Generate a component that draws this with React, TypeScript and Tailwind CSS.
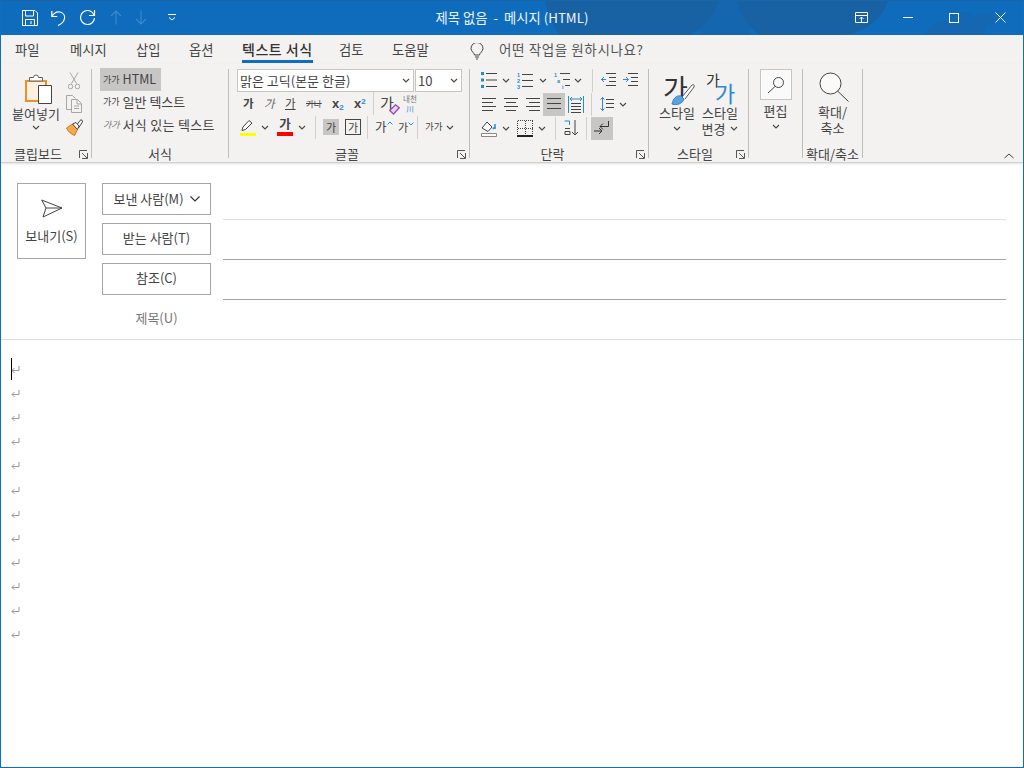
const FONT = "font-['Noto_Sans_CJK_KR','Noto_Sans',sans-serif]";

function Chev({ className = "" }: { className?: string }) {
  return (
    <svg width="8" height="5" viewBox="0 0 8 5" className={className}>
      <path d="M1 1l3 3 3-3" fill="none" stroke="#444" strokeWidth="1.1" />
    </svg>
  );
}

function Launcher() {
  return (
    <svg width="9" height="9" viewBox="0 0 9 9" className="shrink-0">
      <path d="M.5 8V.5H8M8.5 8.5H3M8.5 8.5V3M3 3l5 5" fill="none" stroke="#555" strokeWidth="1" />
    </svg>
  );
}

function Sep({ className = "" }: { className?: string }) {
  return <div className={`w-px h-[23px] bg-[#d2d0ce] shrink-0 ${className}`} />;
}

function Group({ label, width, launcher, labelClass = "", children }: { label: string; width: number; launcher?: boolean; labelClass?: string; children: React.ReactNode }) {
  return (
    <div className="flex flex-col shrink-0 h-[89px] border-r border-[#c0bebc]" style={{ width }}>
      <div className="flex-1 min-h-0">{children}</div>
      <div className="h-[18px] pt-[9px] flex items-center relative text-[13px] text-[#444] justify-center leading-none">
        <span className={labelClass}>{label}</span>
        {launcher && (
          <span className="absolute right-[3px] top-[10px] flex">
            <Launcher />
          </span>
        )}
      </div>
    </div>
  );
}

function Lines({ x = 0, w = 14, y = 3, gap = 5, n = 3, color = "#444" }: { x?: number; w?: number; y?: number; gap?: number; n?: number; color?: string }) {
  return (
    <>
      {Array.from({ length: n }).map((_, i) => (
        <path key={i} d={`M${x} ${y + i * gap + 0.5}h${w}`} stroke={color} strokeWidth="1" />
      ))}
    </>
  );
}

function Align({ kind }: { kind: "l" | "c" | "r" | "j" }) {
  const rows = [
    [0, 14],
    kind === "l" ? [0, 11] : kind === "c" ? [2, 10] : kind === "r" ? [3, 11] : [0, 14],
    [0, 14],
    kind === "l" ? [0, 11] : kind === "c" ? [2, 10] : kind === "r" ? [3, 11] : [0, 14],
  ];
  if (kind === "j") rows.splice(3, 1);
  const gap = kind === "j" ? 5 : 4;
  return (
    <svg width="14" height="14" viewBox="0 0 14 14" className="block">
      {rows.map((r, i) => (
        <path key={i} d={`M${r[0]} ${1.5 + i * gap}h${r[1]}`} stroke="#444" strokeWidth="1" />
      ))}
    </svg>
  );
}

function Ga({ className = "" }: { className?: string }) {
  return <span className={`leading-none ${className}`}>가</span>;
}

export default function App() {
  return (
    <div className={`w-[1024px] h-[768px] bg-white border border-[#106ebe] border-t-0 flex flex-col overflow-hidden text-[#444] ${FONT}`}>
      {/* title bar */}
      <div className="h-[35px] shrink-0 -mx-px bg-[#0f6cbd] relative flex items-center text-white">
        <svg width="1024" height="35" viewBox="0 0 1024 35" className="absolute inset-0">
          <path d="M700 0h50v35h-50z" fill="#1467ae" />
          <path d="M545 0h173c-2 12-13 28-28 35H560c-8-10-13-23-15-35z" fill="#1861a3" />
          <path d="M737 0h151c-4 16-18 30-43 35h-85c-12-7-20-21-23-35z" fill="#1861a3" />
          <path d="M925 35c6-9 14-16 22-14 4-9 20-12 28-4 6-7 18-5 22 4-10 2-14 8-12 14z" fill="#1467b0" />
          <path d="M0 0h1024v1H0z" fill="#1a64a8" />
        </svg>
        <div className="relative flex items-center pl-[22px] gap-[12px]">
          <svg width="16" height="16" viewBox="0 0 16 16" fill="none" stroke="#fff" strokeWidth="1">
            <path d="M.5.5h12.500l2.500 2.500v12.500H.5zM3.500.5v5.500h8V.5M3.500 15.500V9.500h9v6M9 11v3" />
          </svg>
          <svg width="15" height="16" viewBox="0 0 15 16" fill="none" stroke="#fff" strokeWidth="1.2" className="ml-[1px]">
            <path d="M.8 1v5.500h5.500M1 6.300C3 3 6 1.500 9 2c3.500.8 5 3.800 4.500 6.500-.5 2.800-3 5.500-6.500 7" />
          </svg>
          <svg width="17" height="17" viewBox="0 0 17 17" fill="none" stroke="#fff" strokeWidth="1.2" className="ml-[1px]">
            <path d="M15.500 1v5.500H10M15 6C13.500 3 11.200 1.500 8.500 1.500a7 7 0 1 0 7 7.500" />
          </svg>
          <svg width="12" height="15" viewBox="0 0 12 15" fill="none" stroke="#3d8ccb" strokeWidth="1.1" className="ml-[2px]">
            <path d="M6 14.500V1M1 6l5-5 5 5" />
          </svg>
          <svg width="12" height="15" viewBox="0 0 12 15" fill="none" stroke="#3d8ccb" strokeWidth="1.1" className="ml-[1px]">
            <path d="M6 .5V14M1 9l5 5 5-5" />
          </svg>
          <svg width="8" height="7" viewBox="0 0 8 7" fill="none" stroke="#fff" strokeWidth="1" className="ml-[9px]">
            <path d="M0 .5h8M1 3.500l3 2.500 3-2.500" />
          </svg>
        </div>
        <div className="absolute left-0 right-0 top-0 h-full flex items-center justify-center text-[13.3px] text-[#f0f6fb] whitespace-pre">
          <span>제목 없음  -  메시지 (HTML)</span>
        </div>
        <div className="relative ml-auto flex items-center h-full">
          <svg width="13" height="11" viewBox="0 0 13 11" fill="none" stroke="#fff" strokeWidth="1" className="mr-[35px]">
            <path d="M.5.500h12v10H.5zM.5 3.500h12M6.500 10V5M4.500 7l2-2 2 2" />
          </svg>
          <div className="w-[10px] h-px bg-white mr-[36px]" />
          <div className="w-[10px] h-[10px] border border-white mr-[36px]" />
          <svg width="11" height="11" viewBox="0 0 11 11" fill="none" stroke="#fff" strokeWidth="1" className="mr-[18px]">
            <path d="M.5.500l10 10M10.500.500l-10 10" />
          </svg>
        </div>
      </div>

      {/* tabs */}
      <div className="h-[29px] shrink-0 bg-[#f3f2f1] flex items-start pl-[14px] text-[13.3px] text-[#444] leading-none relative">
        <span className="mt-[8px] w-[55px]">파일</span>
        <span className="mt-[8px] w-[66px]">메시지</span>
        <span className="mt-[8px] w-[53px]">삽입</span>
        <span className="mt-[8px] w-[53px]">옵션</span>
        <div className="w-[97px] relative h-full">
          <span className="absolute top-[7px] left-0 font-medium text-[#333] whitespace-nowrap text-[14px] tracking-[0.5px]">텍스트 서식</span>
          <div className="absolute left-0 top-[25px] w-[71px] h-[3px] bg-[#106ebe]" />
        </div>
        <span className="mt-[8px] w-[53px]">검토</span>
        <span className="mt-[8px] w-[78px]">도움말</span>
        <svg width="14" height="17" viewBox="0 0 14 17" fill="none" stroke="#444" strokeWidth="1" className="mt-[8px]">
          <path d="M4.500 12c0-2-3.500-3.500-3.500-6.500a6 6 0 0 1 12 0C13 8.500 9.500 10 9.500 12zM5 14h4M6 16h2" />
        </svg>
        <span className="mt-[8px] ml-[15px] text-[13.5px] tracking-[0.6px] text-[#555]">어떤 작업을 원하시나요?</span>
      </div>

      {/* ribbon */}
      <div className="h-[99px] shrink-0 bg-[#f3f2f1] border-b border-[#d2d0ce] shadow-[0_1px_2px_rgba(0,0,0,0.12)] flex items-start pt-[5px] relative text-[#444]">
        <Group label="클립보드" width={91} launcher labelClass="mr-[16px]">
          <div className="flex pl-[10px] h-full">
            <div className="w-[50px] flex flex-col items-center">
              <svg width="28" height="31" viewBox="0 0 28 31" className="ml-[5px] mt-[4px] shrink-0">
                <path d="M1 8h20v20H1z" fill="#fdf0e0" stroke="#e8912d" strokeWidth="2" />
                <path d="M4.500 4.500h4a2.500 2.500 0 0 1 5 0h4v3.500h-13z" fill="#fff" stroke="#666" strokeWidth="1" />
                <path d="M13.500 12.500h13v18h-13z" fill="#fff" stroke="#444" strokeWidth="1" />
              </svg>
              <span className="text-[13px] leading-none mt-[3px] whitespace-nowrap">붙여넣기</span>
              <Chev className="mt-[5px]" />
            </div>
            <div className="ml-[4px] flex flex-col items-center w-[18px] -mt-[1px]">
              <svg width="12" height="18" viewBox="0 0 12 18" fill="none" stroke="#a8a6a4" strokeWidth="1" className="mt-[4px]">
                <path d="M2 .5l6.500 11M10 .5l-6.500 11" />
                <circle cx="2.500" cy="14.500" r="2.300" />
                <circle cx="9.500" cy="14.500" r="2.300" />
              </svg>
              <svg width="17" height="18" viewBox="0 0 17 18" fill="none" stroke="#a8a6a4" strokeWidth="1" className="mt-[5px]">
                <path d="M5.500 14.500H.5V.5h6l3 3M5.500 4.500h6l4 4v9h-10zM11 5v4h4.500M8 11h5M8 13.500h5" />
              </svg>
              <svg width="17" height="17" viewBox="0 0 17 17" className="mt-[6px]">
                <path d="M.5 9l6-4 5 5.500-3 6c-3-1.500-6.500-3.500-8-7.500z" fill="#f7a84a" stroke="#d9761a" strokeWidth="1" />
                <path d="M10 7l4-5.500a1.400 1.400 0 0 1 2.300 1.700L12.500 9" fill="#fff" stroke="#444" strokeWidth="1" />
                <path d="M6.500 5l3.500-1.500 3 3.500-1.500 3.500z" fill="#fff" stroke="#444" strokeWidth="1" />
              </svg>
            </div>
          </div>
        </Group>

        <Group label="서식" width={137}>
          <div className="flex flex-col pl-[8px] -mt-[1px] text-[13px] leading-none">
            <div className="w-[61px] h-[23px] bg-[#c8c6c4] flex items-center pl-[3px] whitespace-nowrap">
              <span className="text-[9px] mr-[3px]">가가</span>
              <span className="text-[12.5px]">HTML</span>
            </div>
            <div className="h-[21px] flex items-center pl-[3px] whitespace-nowrap">
              <span className="text-[9px] mr-[3px]">가가</span>
              <span>일반 텍스트</span>
            </div>
            <div className="h-[24px] flex items-center pl-[3px] whitespace-nowrap">
              <span className="text-[9px] mr-[3px] italic text-[#777]">가가</span>
              <span className="tracking-[0.3px]">서식 있는 텍스트</span>
            </div>
          </div>
        </Group>

        <Group label="글꼴" width={241} launcher labelClass="mr-[4px]">
          <div className="flex flex-col pl-[8px]">
            <div className="flex gap-px">
              <div className="w-[177px] h-[23px] bg-white border border-[#c8c6c4] flex items-center pl-[2px] pr-[3px] text-[13px] leading-none">
                <span className="whitespace-nowrap">맑은 고딕(본문 한글)</span>
                <Chev className="ml-auto" />
              </div>
              <div className="w-[47px] h-[23px] bg-white border border-[#c8c6c4] flex items-center pl-[2px] pr-[3px] text-[13px] leading-none">
                <span>10</span>
                <Chev className="ml-auto" />
              </div>
            </div>
            <div className="flex items-center h-[23px] text-[11.5px] pl-[6px]">
              <Ga className="font-bold w-[21px]" />
              <Ga className="italic text-[#666] w-[21px]" />
              <Ga className="underline w-[21px]" />
              <span className="line-through text-[8.5px] w-[26px] leading-none">가나</span>
              <span className="w-[22px] font-bold text-[13px] leading-none font-['Liberation_Sans',sans-serif]">x<sub className="text-[#2b88d8] text-[8px]">2</sub></span>
              <span className="w-[19px] font-bold text-[13px] leading-none font-['Liberation_Sans',sans-serif]">x<sup className="text-[#2b88d8] text-[8px]">2</sup></span>
              <Sep className="mr-[6px]" />
              <span className="relative w-[20px] h-[20px] flex items-center">
                <Ga className="text-[15px] -mt-[2px]" />
                <svg width="11" height="11" viewBox="0 0 11 11" className="absolute right-0 bottom-[-1px]">
                  <path d="M.8 6.500L6.500.8l3.700 3L4.500 10z" fill="#e8d3ee" stroke="#9b4fb5" strokeWidth="1.300" />
                </svg>
              </span>
              <span className="flex flex-col items-center text-[7.5px] leading-[10px] text-[#777] ml-[3px]">
                <span>내천</span>
                <span className="text-[#2b88d8]">川</span>
              </span>
            </div>
            <div className="flex items-center h-[24px] text-[12px]">
              <span className="w-[16px] ml-[3px] flex justify-center relative">
                <svg width="16" height="17" viewBox="0 0 16 17">
                  <path d="M2 11l1-3 6-6.500 3 2.500-6.500 6.500-3.500 1z" fill="#fff" stroke="#444" strokeWidth="1" />
                  <path d="M0 14h16v3H0z" fill="#ffff00" />
                </svg>
              </span>
              <Chev className="ml-[5px]" />
              <span className="w-[16px] ml-[8px] flex flex-col items-center leading-none">
                <span className="font-bold text-[12.5px] h-[13px]">가</span>
                <span className="w-[16px] h-[4px] bg-[#ff0000] mt-[1px]" />
              </span>
              <Chev className="ml-[5px]" />
              <Sep className="ml-[9px] mr-[7px]" />
              <span className="w-[16px] h-[16px] bg-[#c8c6c4] flex items-center justify-center"><Ga className="text-[11px]" /></span>
              <span className="w-[16px] h-[16px] border border-[#444] flex items-center justify-center ml-[6px]"><Ga className="text-[11px]" /></span>
              <Sep className="ml-[6px] mr-[7px]" />
              <span className="flex items-start w-[20px] text-[12.5px]"><Ga />
                <svg width="6" height="4" viewBox="0 0 6 4" fill="none" stroke="#2b88d8"><path d="M.5 3.500L3 1l2.500 2.500" /></svg>
              </span>
              <span className="flex items-start w-[19px] text-[11px] ml-[3px]"><Ga />
                <svg width="6" height="4" viewBox="0 0 6 4" fill="none" stroke="#2b88d8"><path d="M.5.500L3 3l2.500-2.500" /></svg>
              </span>
              <Sep className="mr-[7px]" />
              <span className="text-[9.500px] leading-none">가가</span>
              <Chev className="ml-[4px]" />
            </div>
          </div>
        </Group>

        <Group label="단락" width={179} launcher labelClass="mr-[13px]">
          <div className="flex flex-col pl-[11px] -mt-px">
            <div className="flex items-center h-[24px]">
              <svg width="16" height="16" viewBox="0 0 16 16">
                <path d="M0 0h3v3H0zM0 6.500h3v3H0zM0 13h3v3H0z" fill="#2b88d8" />
                <Lines x={5} w={11} y={1} gap={6.500} />
              </svg>
              <Chev className="ml-[5px]" />
              <svg width="16" height="17" viewBox="0 0 16 17" className="ml-[7px] overflow-visible font-['Liberation_Sans',sans-serif]">
                <text x="0" y="5" fontSize="5.500" fontWeight="700" fill="#2b88d8">1</text>
                <text x="0" y="11" fontSize="5.500" fontWeight="700" fill="#2b88d8">2</text>
                <text x="0" y="17" fontSize="5.500" fontWeight="700" fill="#2b88d8">3</text>
                <Lines x={5} w={11} y={2} gap={6} />
              </svg>
              <Chev className="ml-[6px]" />
              <svg width="17" height="17" viewBox="0 0 17 17" className="ml-[7px] overflow-visible font-['Liberation_Sans',sans-serif]">
                <text x="0" y="5" fontSize="5.500" fontWeight="700" fill="#2b88d8">1</text>
                <text x="3" y="11" fontSize="5.500" fontWeight="700" fill="#2b88d8">a</text>
                <text x="8" y="17" fontSize="5.500" fontWeight="700" fill="#2b88d8">i</text>
                <path d="M6 1.500h10M9 7.500h7M11 13.500h5" stroke="#444" strokeWidth="1" />
              </svg>
              <Chev className="ml-[3px]" />
              <Sep className="ml-[10px] mr-[8px]" />
              <svg width="15" height="14" viewBox="0 0 15 14">
                <path d="M5 .5h10M8 4.500h7M8 8.500h7M5 12.500h10" stroke="#444" />
                <path d="M0 6.500h5M3 4L.5 6.500 3 9" stroke="#2b88d8" fill="none" />
              </svg>
              <svg width="15" height="14" viewBox="0 0 15 14" className="ml-[7px]">
                <path d="M5 .5h10M8 4.500h7M8 8.500h7M5 12.500h10" stroke="#444" />
                <path d="M0 6.500h5M3 4l2.500 2.500L3 9" stroke="#2b88d8" fill="none" />
              </svg>
            </div>
            <div className="flex items-center h-[24px]">
              <span className="ml-px"><Align kind="l" /></span>
              <span className="ml-[8px]"><Align kind="c" /></span>
              <span className="ml-[8px]"><Align kind="r" /></span>
              <span className="ml-[3px] w-[22px] h-[23px] bg-[#c8c6c4] flex items-center justify-center"><Align kind="j" /></span>
              <svg width="16" height="17" viewBox="0 0 16 17" className="ml-[3px]">
                <path d="M.5 0v17M15.500 0v17M2 3h12M4 1L2 3l2 2M12 1l2 2-2 2" stroke="#2b88d8" fill="none" />
                <path d="M3 7.500h10M3 10.500h10M3 13.500h10M3 16.500h10" stroke="#444" />
              </svg>
              <Sep className="ml-[7px] mr-[8px]" />
              <svg width="14" height="16" viewBox="0 0 14 16">
                <path d="M2.500 1v14M.5 3.500l2-2 2 2M.5 12.500l2 2 2-2" stroke="#2b88d8" fill="none" />
                <path d="M6 3.500h8M6 7.500h8M6 11.500h8" stroke="#444" />
              </svg>
              <Chev className="ml-[5px]" />
            </div>
            <div className="flex items-center h-[24px]">
              <svg width="16" height="17" viewBox="0 0 16 17">
                <path d="M1 8l5-6 5 5-4 4.500z" fill="#fff" stroke="#444" />
                <path d="M12 9c1-1.500 2-2 2.500-1.500M14 4v5" stroke="#2b88d8" fill="none" strokeWidth="1.500" />
                <path d="M.5 13.500h15v3H.5z" fill="#fff" stroke="#888" />
              </svg>
              <Chev className="ml-[5px]" />
              <svg width="16" height="17" viewBox="0 0 16 17" className="ml-[7px]" shapeRendering="crispEdges">
                <path d="M.5.5v15M8 .5v15M15.500.500v15M.5.500h15M.5 8h15" stroke="#444" strokeDasharray="1 1" fill="none" />
                <path d="M0 16h16" stroke="#222" strokeWidth="1.300" />
              </svg>
              <Chev className="ml-[5px]" />
              <Sep className="ml-[9px] mr-[8px]" />
              <svg width="16" height="17" viewBox="0 0 16 17">
                <path d="M.5 1h5v4" fill="none" stroke="#2b88d8" />
                <path d="M1 8.500h5M1 14.500h5v-3H1zM11 0v15M8 12l3 3 3-3" fill="none" stroke="#444" />
              </svg>
              <Sep className="ml-[6px] mr-[4px]" />
              <span className="w-[22px] h-[23px] bg-[#c8c6c4] flex items-center justify-center">
                <svg width="16" height="16" viewBox="0 0 16 16" fill="none" stroke="#333">
                  <path d="M0 11h8M5 8l3 3-3 3M14.500 1v5.500H6M9 3.500L6 6.500l3 3" />
                </svg>
              </span>
            </div>
          </div>
        </Group>

        <Group label="스타일" width={100} launcher labelClass="mr-[7px]">
          <div className="flex pl-[7px] pt-[1px] text-[13px] leading-none">
            <div className="w-[42px] flex flex-col items-center">
              <span className="relative h-[34px] w-[40px]">
                <span className="absolute left-[6px] top-[2px] text-[27px] leading-[32px] text-[#333]">가</span>
                <svg width="24" height="22" viewBox="0 0 24 22" className="absolute left-[14px] top-[13px]">
                  <path d="M11 14L21 2c1-1 3 0 2 2L14 16" fill="#fff" stroke="#555" />
                  <path d="M1 21c1-5 4-9 9-8l3 3c-1 4-7 7-12 5z" fill="#5ba3de" stroke="#2b88d8" />
                </svg>
              </span>
              <span className="mt-[2px]">스타일</span>
              <Chev className="mt-[7px]" />
            </div>
            <div className="w-[42px] ml-[1px] flex flex-col items-center">
              <span className="relative h-[34px] w-[36px]">
                <span className="absolute left-[4px] top-[2px] text-[15px] leading-none text-[#333]">가</span>
                <span className="absolute left-[13px] top-[11px] text-[22px] leading-none text-[#2b88d8]">가</span>
              </span>
              <span className="mt-[2px]">스타일</span>
              <span className="flex items-center mt-[3px]">변경<Chev className="ml-[5px]" /></span>
            </div>
          </div>
        </Group>

        <Group label="" width={54}>
          <div className="flex flex-col items-center text-[13px] leading-none">
            <span className="w-[32px] h-[31px] bg-[#fbfafa] border border-[#c8c6c4] flex items-center justify-center">
              <svg width="18" height="18" viewBox="0 0 18 18" fill="none" stroke="#444">
                <circle cx="11.500" cy="6.500" r="5" />
                <path d="M8 10.500L1 17" />
              </svg>
            </span>
            <span className="mt-[4px]">편집</span>
            <Chev className="mt-[7px]" />
          </div>
        </Group>

        <Group label="확대/축소" width={60} labelClass="whitespace-nowrap">
          <div className="flex flex-col items-center pt-[3px] text-[13px] leading-[16px]">
            <svg width="30" height="30" viewBox="0 0 30 30" fill="none" stroke="#444" className="ml-[2px]">
              <circle cx="11.500" cy="11.500" r="10.500" fill="#fbfafa" />
              <path d="M18.500 19L29.500 29.500" />
            </svg>
            <span className="mt-[2px] text-center">확대/<br />축소</span>
          </div>
        </Group>

        <svg width="10" height="6" viewBox="0 0 10 6" fill="none" stroke="#444" className="absolute right-[9px] bottom-[3px]">
          <path d="M.5 5L5 1l4.500 4" />
        </svg>
      </div>

      {/* header fields */}
      <div className="h-[177px] shrink-0 border-b border-[#e1dfdd] flex pt-[20px] pl-[16px] pr-[17px] text-[13px] leading-none">
        <div className="w-[69px] h-[76px] border border-[#a6a6a6] flex flex-col items-center shrink-0">
          <svg width="22" height="19" viewBox="0 0 22 19" fill="none" stroke="#444" className="mt-[15px]">
            <path d="M.7 1L21 9 2 18 5 9zM5 9h16" />
          </svg>
          <span className="mt-[11px] whitespace-nowrap">보내기(S)</span>
        </div>
        <div className="ml-[16px] w-[109px] shrink-0 flex flex-col gap-[8px]">
          <div className="h-[32px] border border-[#a6a6a6] flex items-center justify-center pb-[2px]">
            <span className="whitespace-nowrap">보낸 사람(M)</span>
            <svg width="10" height="6" viewBox="0 0 10 6" fill="none" stroke="#333" strokeWidth="1.200" className="ml-[6px] mt-[2px]">
              <path d="M.5.500L5 5 9.500.500" />
            </svg>
          </div>
          <div className="h-[32px] border border-[#a6a6a6] flex items-center justify-center pb-[3px]">받는 사람(T)</div>
          <div className="h-[32px] border border-[#a6a6a6] flex items-center justify-center pb-[3px]">참조(C)</div>
          <div className="h-[30px] flex items-center justify-center text-[#777] pb-[2px]">제목(U)</div>
        </div>
        <div className="ml-[12px] flex-1 flex flex-col">
          <div className="h-[37px] border-b border-[#e1dfdd] shrink-0" />
          <div className="h-[40px] border-b border-[#a6a6a6] shrink-0" />
          <div className="h-[40px] border-b border-[#a6a6a6] shrink-0" />
        </div>
      </div>

      {/* body */}
      <div className="flex-1 relative pl-[10px] pt-[18px] flex flex-col">
        <div className="absolute left-[10px] top-[18px] w-px h-[22px] bg-black" />
        {Array.from({ length: 12 }).map((_, i) => (
          <div key={i} className="h-[24.100px] shrink-0 flex items-center">
            <svg width="9" height="8" viewBox="0 0 9 8" fill="none" stroke="#999" strokeWidth="1">
              <path d="M8 0v4.500H1M3.500 2L1 4.500 3.500 7" />
            </svg>
          </div>
        ))}
      </div>
    </div>
  );
}
